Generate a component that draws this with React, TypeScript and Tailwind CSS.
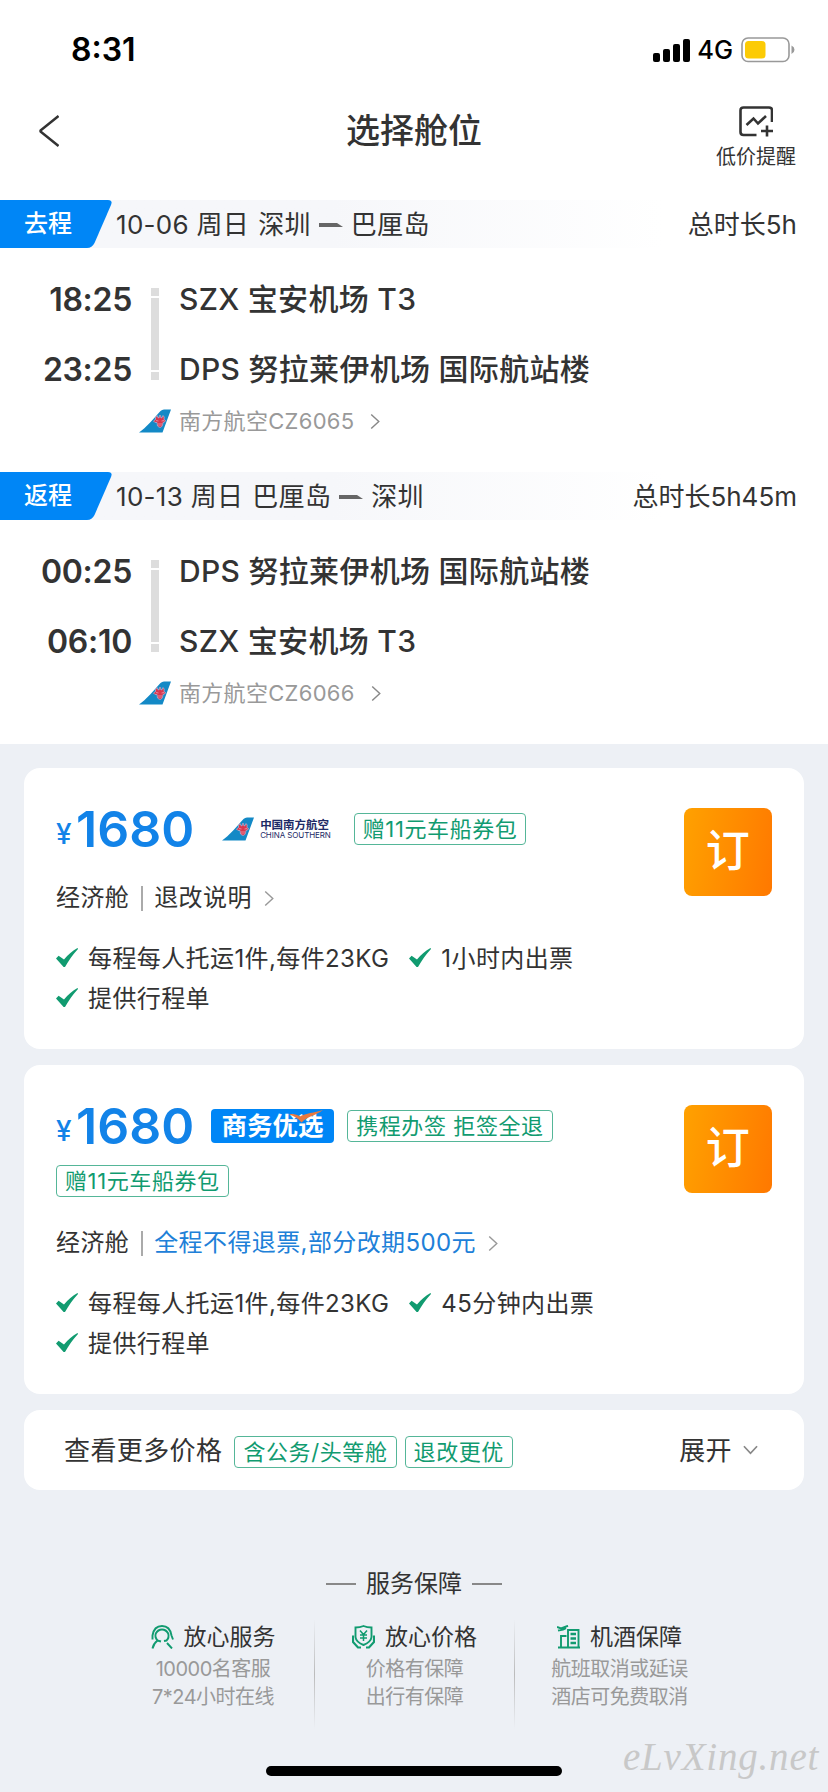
import React from "react";

const Chevron = ({ className }: { className?: string }) => (
  <svg viewBox="0 0 10 18" fill="none" className={className}>
    <path d="M1 1.5 9 9 1 16.5" stroke="currentColor" strokeWidth="1.5" />
  </svg>
);

const Check = () => (
  <svg viewBox="0 0 22 20" className="h-5 w-[22px] shrink-0 -translate-y-[1px]">
    <path d="M0 10.4 2.6 7.8 8 11.6C12 6.6 16.500 2.600 21.500 0 22 .4 22 .8 21.800 1.200 17 6.400 12.800 12.400 9 19H7.600Z" fill="#119b70" />
  </svg>
);

const Tail = ({ className }: { className?: string }) => (
  <svg viewBox="0 0 32 24" className={className}>
    <path d="M0 23.500C7 19 15 9 21.500 2Q23 .5 25 .5H32L23.500 23.500Z" fill="#1389c6" />
    <path
      d="M18 6.500Q18.500 9 20 9L20.500 6.500H21.500L22 9Q23.500 9 24 6.500L25.200 8 25 10.500 26.500 11.500Q26 13.500 24 13.500L23.500 16.500Q21.500 20 18.500 17L18 13.500Q15.500 14 14.500 12L16.500 10.500V8.500Z"
      fill="#d8364e"
      stroke="#b9b7d8"
      strokeWidth=".7"
    />
    <path d="M17 11.500 19.500 12M25 11.500 22.500 12M20 14V17M22 14V17" stroke="#eba9b9" strokeWidth=".7" />
  </svg>
);

const Tag = ({ children }: { children: React.ReactNode }) => (
  <span className="flex h-8 items-center rounded border border-[#55b698] px-2 text-[22px] leading-none tracking-[0.6px] whitespace-nowrap text-[#119b70]">
    {children}
  </span>
);

type Stop = { time: string; name: string };

type SegmentProps = {
  label: string;
  date: string;
  from: string;
  to: string;
  total: string;
  stops: Stop[];
  flight: string;
};

const Segment = ({ label, date, from, to, total, stops, flight }: SegmentProps) => (
  <section className="h-[272px]">
    <div className="flex h-12 items-center bg-linear-to-r from-[#f6f7fa] from-40% to-white to-80% pr-[31px] text-[26px] leading-none text-[#333]">
      <div className="grid h-12 w-28 shrink-0">
        <svg viewBox="0 0 112 48" className="col-start-1 row-start-1 h-12 w-28">
          <path d="M0 0H108Q113 0 111 5L94.500 43Q92 48 87 48H0Z" fill="#0086f6" />
        </svg>
        <span className="col-start-1 row-start-1 pl-6 text-2xl leading-[47px] font-medium text-white">{label}</span>
      </div>
      <div className="flex items-center pt-0.5 pl-1 tracking-[0.3px]">
        <span>{date}</span>
        <span className="ml-[9px]">{from}</span>
        <svg viewBox="0 0 24 4" className="mx-2 h-1 w-6">
          <path d="M0 0H18L24 4H0Z" fill="#666" />
        </svg>
        <span>{to}</span>
      </div>
      <span className="ml-auto pt-0.5">{total}</span>
    </div>

    <div className="grid grid-cols-[132px_47px_1fr] pt-[17px] text-[#333]">
      <div className="text-right text-[32px] leading-[70px] font-semibold tracking-[-0.3px]">
        {stops.map((s) => (
          <p key={s.time}>{s.time}</p>
        ))}
      </div>
      <div className="flex flex-col gap-0.5 pt-[23px] pl-[19px]">
        <i className="h-2 w-2 bg-[#ddd]" />
        <i className="h-[72px] w-2 bg-[#ddd]" />
        <i className="h-2 w-2 bg-[#ddd]" />
      </div>
      <div className="-mt-px text-[30px] leading-[70px] font-medium tracking-[0.3px]">
        {stops.map((s) => (
          <p key={s.time}>{s.name}</p>
        ))}
      </div>
    </div>

    <div className="flex h-8 items-center pl-[139px] text-[22px] leading-none tracking-[0.3px] text-[#999]">
      <Tail className="h-6 w-8" />
      <span className="ml-2">{flight}</span>
      <Chevron className="ml-4 h-[17px] w-[10px] text-[#888]" />
    </div>
  </section>
);

const AirlineLogo = () => (
  <div className="ml-7 flex items-center">
    <Tail className="h-6 w-8" />
    <div className="ml-1.5 flex flex-col text-[#1d2a66]">
      <span className="text-[11.5px] leading-[13px] font-bold">中国南方航空</span>
      <span className="-mt-px text-[8px] leading-[8px] tracking-[-0.1px] whitespace-nowrap">CHINA SOUTHERN</span>
    </div>
  </div>
);

const BusinessBadge = () => (
  <div className="relative ml-[17px] flex h-[34px] w-[123px] items-center justify-center rounded bg-[#0086f6] text-[25.500px] leading-none font-bold text-white">
    商务优选
    <svg viewBox="0 0 36 14" className="absolute top-0 left-[78px] h-[14px] w-9">
      <path d="M0 5.500C4 4.500 8 5.500 11 7.500 17 4 25 4 34 1 26 7 19 7 12.500 13.500 9 9 5 7 0 5.500Z" fill="#e8793f" />
    </svg>
  </div>
);

type FareProps = {
  brand: React.ReactNode;
  extraTag?: string;
  rule: string;
  highlight?: boolean;
  issue: string;
};

const FareCard = ({ brand, extraTag, rule, highlight, issue }: FareProps) => (
  <article className="flex justify-between rounded-2xl bg-white pt-10 pr-8 pb-[30px] pl-8 text-2xl leading-none tracking-[0.4px] text-[#333]">
    <div>
      <div className="flex h-[42px] items-center tracking-normal">
        <div className="flex items-baseline font-semibold text-[#1283e8]">
          <span className="w-5 -translate-y-[3px] text-[28px] font-medium">¥</span>
          <span className="text-[50px]">1680</span>
        </div>
        {brand}
      </div>
      {extraTag && (
        <div className="mt-[18px] -mb-[2px] flex h-8">
          <Tag>{extraTag}</Tag>
        </div>
      )}
      <div className="mt-8 flex h-8 items-center">
        <span>经济舱</span>
        <i className="mr-[11px] ml-3 h-[25px] w-0.5 bg-[#aaa]" />
        <span className={highlight ? "text-[#2080d8]" : ""}>{rule}</span>
        <Chevron className="ml-3 h-[17px] w-[10px] text-[#999]" />
      </div>
      <ul className="mt-[25px] flex w-[560px] flex-wrap gap-x-5">
        {["每程每人托运1件,每件23KG", issue, "提供行程单"].map((t) => (
          <li key={t} className="flex h-10 items-center gap-2.5">
            <Check />
            <span>{t}</span>
          </li>
        ))}
      </ul>
    </div>
    <button className="h-[88px] w-[88px] shrink-0 rounded-lg bg-linear-100 from-[#ffa100] to-[#ff7800] pb-0.5 text-[44px] leading-none font-medium text-white">
      订
    </button>
  </article>
);

const services = [
  {
    title: "放心服务",
    width: "w-[202px]",
    lines: ["10000名客服", "7*24小时在线"],
    icon: (
      <>
        <path d="M1.500 14.500V10.500Q3 1 11 1T20.500 10.500L22 14.500" />
        <path d="M6.500 15.500Q3.500 12 4.800 8.500 7 4.500 11 4.500T17.200 8.500Q18.500 12.500 15.500 15.500L13 16" />
        <path d="M1.500 23.500Q2.500 18.500 6.500 15.500L10 16.500M16 18 21 23.500" />
      </>
    ),
  },
  {
    title: "放心价格",
    width: "w-[199px]",
    lines: ["价格有保障", "出行有保障"],
    icon: (
      <>
        <path d="M3.500 2.500Q8 2.500 11.500 1 15 2.500 19.500 2.500V12Q19 17 11.500 20 4 17 3.500 12Z" />
        <path d="M8 5.500 11.500 9.500 15 5.500M11.500 9.500V16M8 10H15M8 13H15" strokeWidth="1.500" />
        <path d="M1 10.500V17L6 22.500H9M22 10.500V17L17 22.500H14" strokeWidth="2.200" />
      </>
    ),
  },
  {
    title: "机酒保障",
    width: "w-[209px]",
    lines: ["航班取消或延误", "酒店可免费取消"],
    icon: (
      <>
        <path d="M1 22.500H23M11 22V5H21.500V22M4 22V11H9.500" />
        <path d="M13.500 9H19M13.500 13.500H19M13.500 18H19" strokeWidth="2.400" />
        <path d="M0 2 4 3.500 11 .8M1 5.500 6 4.500 9 3" strokeWidth="2" />
      </>
    ),
  },
];

const StatusBar = () => (
  <div className="flex h-[100px] items-center pr-[33px] pl-[71px] text-black">
    <span className="text-[32px] leading-none font-semibold">8:31</span>
    <svg viewBox="0 0 37 23" className="ml-auto h-[23px] w-[37px]">
      <rect y="14" width="7" height="9" rx="2" />
      <rect x="10" y="10" width="7" height="13" rx="2" />
      <rect x="20" y="5" width="7" height="18" rx="2" />
      <rect x="30" width="7" height="23" rx="2" />
    </svg>
    <span className="mr-2 ml-[7px] text-[25.500px] leading-none font-medium">4G</span>
    <svg viewBox="0 0 54 26" className="h-[26px] w-[54px]">
      <rect x="1" y="1" width="47" height="23.500" rx="6" fill="none" stroke="#999" strokeWidth="1.600" />
      <rect x="4" y="4" width="20.500" height="17.500" rx="3.500" fill="#fccb05" />
      <path d="M50.500 8.500Q53.500 10 53.500 12.800T50.500 17Z" fill="#999" />
    </svg>
  </div>
);

const App = () => {
  return (
    <div className="h-[1792px] w-[828px] overflow-hidden bg-[#edf0f5] font-['Inter','Noto_Sans_CJK_SC',sans-serif]">
      <div className="bg-white">
        <StatusBar />
        <header className="grid h-[100px] grid-cols-[200px_1fr_200px] text-[#333]">
          <svg viewBox="0 0 20 32" fill="none" className="mt-[15px] ml-[39px] h-8 w-5">
            <path d="M19.500 1 1.500 15.500V16.500L19.500 31" stroke="currentColor" strokeWidth="2.400" strokeLinejoin="round" />
          </svg>
          <h1 className="text-center text-[34px] leading-[62px] font-medium">选择舱位</h1>
          <div className="flex flex-col items-center justify-self-end pt-1.5 pr-8">
            <svg viewBox="0 0 34 31" fill="none" stroke="currentColor" strokeWidth="2.600" className="h-[31px] w-[34px]">
              <path d="M33 16V4.500Q33 1.500 30 1.500H4.500Q1.500 1.500 1.500 4.500V26Q1.500 29 4.500 29H17.500" />
              <path d="M7.500 19 14.500 12.500 19 17.500 27 10M28 19.500V30.500M22 25H34" />
            </svg>
            <span className="mt-2 text-xl leading-6">低价提醒</span>
          </div>
        </header>

        <Segment
          label="去程"
          date="10-06 周日"
          from="深圳"
          to="巴厘岛"
          total="总时长5h"
          stops={[
            { time: "18:25", name: "SZX 宝安机场 T3" },
            { time: "23:25", name: "DPS 努拉莱伊机场 国际航站楼" },
          ]}
          flight="南方航空CZ6065"
        />
        <Segment
          label="返程"
          date="10-13 周日"
          from="巴厘岛"
          to="深圳"
          total="总时长5h45m"
          stops={[
            { time: "00:25", name: "DPS 努拉莱伊机场 国际航站楼" },
            { time: "06:10", name: "SZX 宝安机场 T3" },
          ]}
          flight="南方航空CZ6066"
        />
      </div>

      <main className="flex flex-col gap-4 px-6 pt-6">
        <FareCard
          brand={
            <>
              <AirlineLogo />
              <div className="ml-[23px]">
                <Tag>赠11元车船券包</Tag>
              </div>
            </>
          }
          rule="退改说明"
          issue="1小时内出票"
        />
        <FareCard
          brand={
            <>
              <BusinessBadge />
              <div className="ml-[13px]">
                <Tag>携程办签 拒签全退</Tag>
              </div>
            </>
          }
          extraTag="赠11元车船券包"
          rule="全程不得退票,部分改期500元"
          highlight
          issue="45分钟内出票"
        />
        <article className="flex h-20 items-center rounded-2xl bg-white pr-[46px] pl-10 text-[26px] leading-none tracking-[0.4px] text-[#333]">
          <span className="mr-3 pt-0.5">查看更多价格</span>
          <div className="flex gap-2 pt-1">
            <Tag>含公务/头等舱</Tag>
            <Tag>退改更优</Tag>
          </div>
          <span className="ml-auto pt-0.5">展开</span>
          <svg viewBox="0 0 16 10" fill="none" className="ml-[11px] h-[10px] w-[15px]">
            <path d="M1 1 8 8.500 15 1" stroke="#888" strokeWidth="1.800" />
          </svg>
        </article>
      </main>

      <footer>
        <div className="flex items-center justify-center gap-2.5 pt-[78px] text-2xl leading-8 text-[#333]">
          <i className="h-0.5 w-[30px] bg-[#888]" />
          <span>服务保障</span>
          <i className="h-0.5 w-[30px] bg-[#888]" />
        </div>
        <div className="mt-[19px] flex h-[112px] pl-[112px]">
          {services.map((s, i) => (
            <div key={s.title} className="flex">
              {i > 0 && <i className="h-[110px] w-px bg-linear-to-b from-transparent via-[#bbb] to-transparent" />}
              <div className={`flex ${s.width} flex-col items-center text-center text-xl leading-7 text-[#999]`}>
                <div className="flex h-9 items-center gap-2.5 text-[23px] text-[#333]">
                  <svg viewBox="0 0 23 24" fill="none" stroke="#119b70" strokeWidth="1.900" className="h-6 w-[23px]">
                    {s.icon}
                  </svg>
                  <span>{s.title}</span>
                </div>
                {s.lines.map((l) => (
                  <p key={l} className="tracking-[-0.5px]">{l}</p>
                ))}
              </div>
            </div>
          ))}
        </div>
        <div className="grid h-[61px] grid-cols-[266px_296px_1fr]">
          <i className="col-start-2 mt-[35px] h-2.5 rounded-full bg-black" />
          <span className="pl-[61px] font-['Liberation_Serif',serif] text-[39px] leading-[52px] tracking-[0.8px] text-[#c8c8c8] italic">eLvXing.net</span>
        </div>
      </footer>
    </div>
  );
};

export default App;
